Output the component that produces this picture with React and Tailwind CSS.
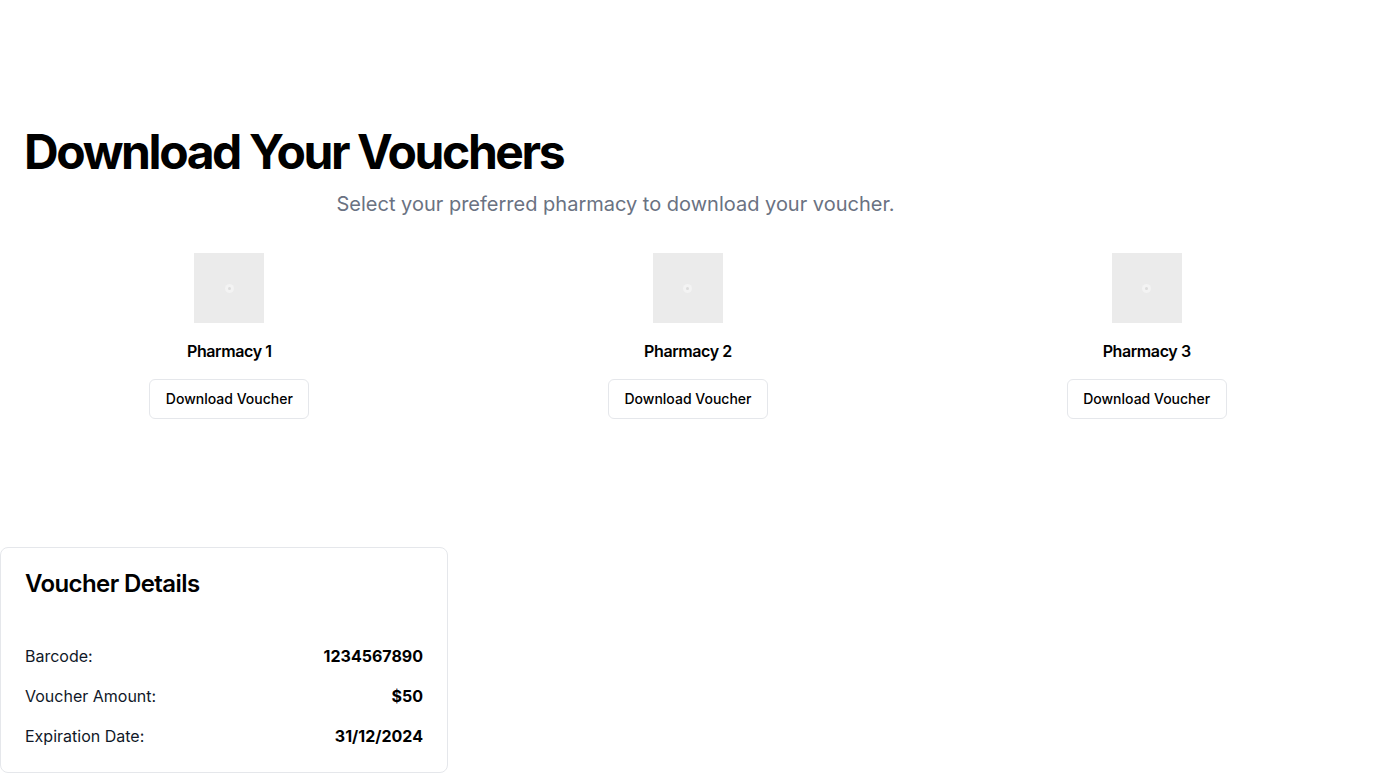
import React from 'react';

const pharmacies = [
  { id: 1, name: 'Pharmacy 1' },
  { id: 2, name: 'Pharmacy 2' },
  { id: 3, name: 'Pharmacy 3' },
];

const details = [
  { label: 'Barcode:', value: '1234567890' },
  { label: 'Voucher Amount:', value: '$50' },
  { label: 'Expiration Date:', value: '31/12/2024' },
];

const PharmacyCard = ({ pharmacy }) => (
  <div className="flex flex-col items-center">
    {/* placeholder logo */}
    <div className="w-[70px] h-[70px] bg-[#ebebeb] flex items-center justify-center">
      <div className="w-[9px] h-[9px] rounded-full bg-[#f3f3f3] flex items-center justify-center">
        <div className="w-[3px] h-[3px] rounded-full bg-[#dcdcdc]"></div>
      </div>
    </div>
    <h2 className="mt-4 text-base leading-6 font-semibold tracking-tight text-black">{pharmacy.name}</h2>
    <button className="mt-4 h-10 w-40 rounded-md border border-gray-200 bg-white text-sm font-medium text-black">
      Download Voucher
    </button>
  </div>
);

export default function App() {
  return (
    <div className="min-h-screen bg-white text-black" style={{ fontFamily: 'Inter, "Noto Sans", sans-serif' }}>
      <div className="pt-32 px-6">
        <h1 className="text-5xl leading-none font-bold tracking-tighter">Download Your Vouchers</h1>
      </div>
      <p className="mt-[14px] w-[1231px] text-center text-xl leading-7 text-gray-500">
        Select your preferred pharmacy to download your voucher.
      </p>

      <div className="mt-[35px] grid grid-cols-3">
        {pharmacies.map((p) => (
          <PharmacyCard key={p.id} pharmacy={p} />
        ))}
      </div>

      <div className="mt-32 w-[448px] rounded-lg border border-gray-200 bg-white">
        <div className="p-6">
          <h3 className="text-2xl leading-none font-semibold tracking-tight">Voucher Details</h3>
        </div>
        <div className="px-6 pb-6 pt-6 space-y-4">
          {details.map((d) => (
            <div key={d.label} className="flex items-center justify-between text-base leading-6">
              <span className="text-gray-900">{d.label}</span>
              <span className="font-bold">{d.value}</span>
            </div>
          ))}
        </div>
      </div>
    </div>
  );
}
